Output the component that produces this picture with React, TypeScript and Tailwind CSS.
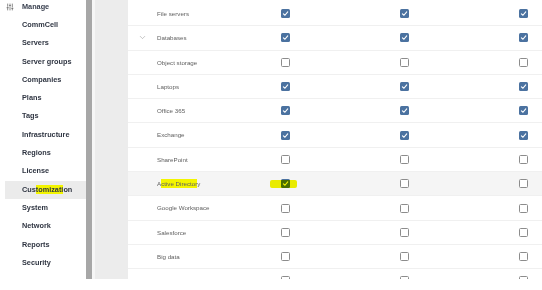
import React from 'react';
import { ChevronDown, SlidersVertical } from 'lucide-react';

const menu = [
  'CommCell', 'Servers', 'Server groups', 'Companies', 'Plans', 'Tags', 'Infrastructure',
  'Regions', 'License', 'Customization', 'System', 'Network', 'Reports', 'Security',
];

type Row = { name: string; checks: boolean[]; expand?: boolean };

const rows: Row[] = [
  { name: 'File servers', checks: [true, true, true] },
  { name: 'Databases', checks: [true, true, true], expand: true },
  { name: 'Object storage', checks: [false, false, false] },
  { name: 'Laptops', checks: [true, true, true] },
  { name: 'Office 365', checks: [true, true, true] },
  { name: 'Exchange', checks: [true, true, true] },
  { name: 'SharePoint', checks: [false, false, false] },
  { name: 'Active Directory', checks: [true, false, false] },
  { name: 'Google Workspace', checks: [false, false, false] },
  { name: 'Salesforce', checks: [false, false, false] },
  { name: 'Big data', checks: [false, false, false] },
  { name: '', checks: [false, false, false] },
];

const Checkbox: React.FC<{ checked: boolean }> = ({ checked }) =>
  checked ? (
    <div className="w-[9px] h-[9px] rounded-[1.5px] bg-[#4b72a0] flex items-center justify-center">
      <svg width="7" height="7" viewBox="0 0 10 10" fill="none">
        <path d="M2 5.5 L4.2 7.5 L8.2 2.8" stroke="white" strokeWidth="1.6" strokeLinecap="round" strokeLinejoin="round" />
      </svg>
    </div>
  ) : (
    <div className="w-[9px] h-[9px] rounded-[1.5px] border border-[#8c8c8c] bg-white" />
  );

const App: React.FC = () => {
  return (
    <div className="w-[542px] h-[290px] bg-white overflow-hidden font-['Liberation_Sans',Arial,sans-serif]">
      <div className="h-[279px] flex overflow-hidden">
        {/* Sidebar */}
        <div className="w-[86px] shrink-0 flex flex-col -mt-[2px]">
          <div className="h-[18.3px] shrink-0 flex items-center gap-[8px] pl-[6px]">
            <SlidersVertical size={8} className="text-[#555]" strokeWidth={2} />
            <span className="text-[7.3px] font-bold text-[#3a4150]">Manage</span>
          </div>
          {menu.map(item => (
            <div
              key={item}
              className={`h-[18.3px] shrink-0 flex items-center pl-[17px] ml-[5px] ${item === 'Customization' ? 'bg-[#ebebeb]' : ''}`}
            >
              {item === 'Customization' ? (
                <span className="text-[7.3px] font-bold text-[#2f3542]">
                  Cus<span className="bg-[#f3f500]">tomizati</span>on
                </span>
              ) : (
                <span className="text-[7.3px] font-bold text-[#2f3542]">{item}</span>
              )}
            </div>
          ))}
          <div className="h-[18.3px] shrink-0 flex items-center pl-[10px]">
            <ChevronDown size={6} className="text-[#555]" />
          </div>
        </div>

        {/* Scrollbar + side panel */}
        <div className="w-[6px] shrink-0 bg-[#a7a7a7]" />
        <div className="w-[3px] shrink-0 bg-[#f6f6f6]" />
        <div className="w-[33px] shrink-0 bg-[#ececec]" />

        {/* Table */}
        <div className="flex-1 overflow-hidden mt-[2px]">
          {rows.map((row, i) => (
            <div
              key={i}
              className={`relative h-[24.3px] grid grid-cols-[29px_68.5px_119px_119px_119px] items-center border-b border-[#f0f0f0] ${row.name === 'Active Directory' ? 'bg-[#f5f5f5]' : ''}`}
            >
              <div className="flex justify-center">
                {row.expand && <ChevronDown size={9} strokeWidth={1.3} className="text-[#8a8a8a]" />}
              </div>
              <div className="text-[6.2px] text-[#606060] whitespace-nowrap">
                {row.name === 'Active Directory' ? (
                  <>
                    A<span className="bg-[#f3f500] py-[1px]">ctive Director</span>y
                  </>
                ) : (
                  row.name
                )}
              </div>
              {row.checks.map((c, j) => (
                <div key={j} className="relative flex justify-center">
                  <Checkbox checked={c} />
                  {row.name === 'Active Directory' && j === 0 && (
                    <div className="absolute left-[44px] top-[1px] w-[27px] h-[8px] bg-[#f3f500] mix-blend-multiply rounded-[2px]" />
                  )}
                </div>
              ))}
            </div>
          ))}
        </div>
      </div>
    </div>
  );
};

export default App;
